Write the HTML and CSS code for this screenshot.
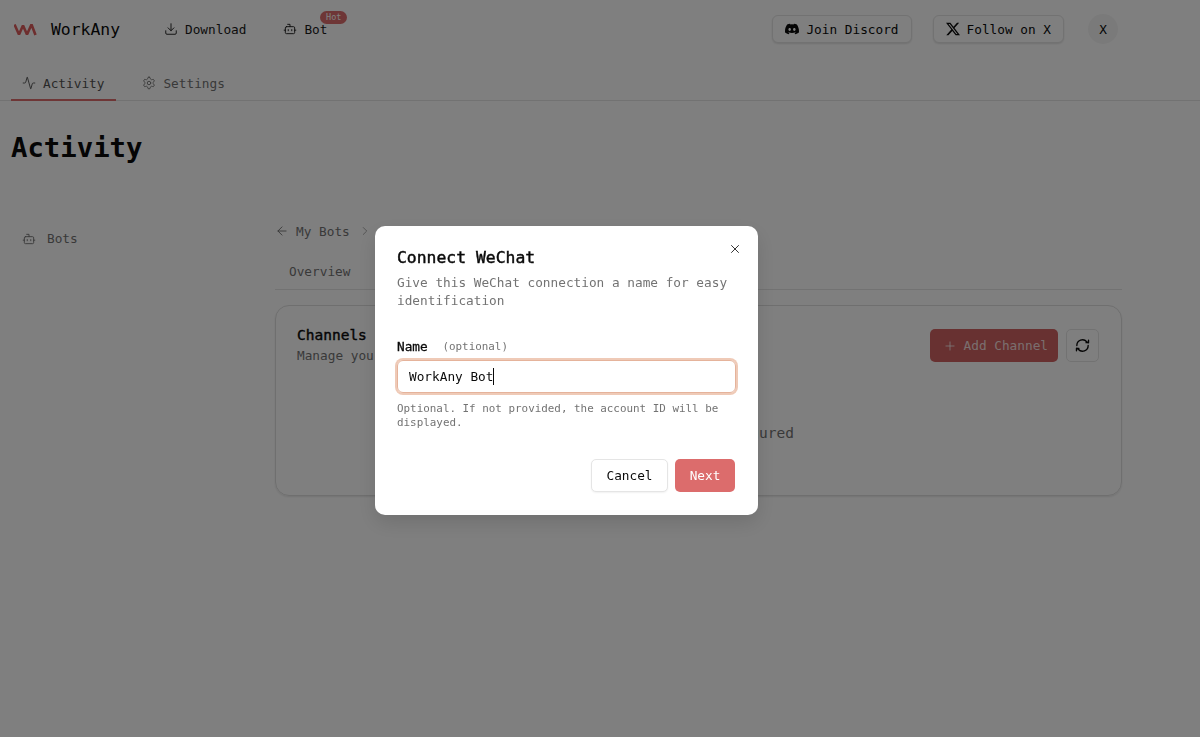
FILE: index.html
```html
<!DOCTYPE html>
<html lang="en">
<head>
    <meta charset="UTF-8">
    <meta name="viewport" content="width=device-width, initial-scale=1.0">
    <title>WorkAny - Activity</title>
    <link rel="stylesheet" href="styles.css">
</head>
<body>

    <header class="topbar">
        <div class="brand">
            <svg class="logo" viewBox="0 0 23 13" width="23" height="13" fill="none" stroke="#dc5c5c" stroke-width="2.6" stroke-linejoin="bevel">
                <path d="M0.500 1.500L5 11.500 9 2.500 13 11.500 17.500 1.500 21.500 12"/>
            </svg>
            <span>WorkAny</span>
        </div>
        <a class="nav-link">
            <svg class="icon" viewBox="0 0 24 24"><path d="M12 15V3"/><path d="M21 15v4a2 2 0 0 1-2 2H5a2 2 0 0 1-2-2v-4"/><path d="m7 10 5 5 5-5"/></svg>
            Download
        </a>
        <a class="nav-link bot-link">
            <svg class="icon" viewBox="0 0 24 24"><path d="M12 8V4H8"/><rect x="4" y="8" width="16" height="12" rx="2"/><path d="M2 14h2"/><path d="M20 14h2"/><path d="M15 13v2"/><path d="M9 13v2"/></svg>
            Bot
            <span class="hot">Hot</span>
        </a>
        <div class="topbar-right">
            <a class="outline-btn">
                <svg class="brand-icon" viewBox="0 0 24 24" fill="#0a0a0a"><path d="M20.317 4.37a19.790 19.790 0 0 0-4.885-1.515.074.074 0 0 0-.079.037c-.21.375-.444.864-.608 1.25a18.270 18.270 0 0 0-5.487 0 12.640 12.640 0 0 0-.617-1.25.077.077 0 0 0-.079-.037A19.740 19.740 0 0 0 3.677 4.370a.070.070 0 0 0-.032.027C.533 9.046-.32 13.580.099 18.057a.082.082 0 0 0 .031.057 19.900 19.900 0 0 0 5.993 3.030.078.078 0 0 0 .084-.028 14.090 14.090 0 0 0 1.226-1.994.076.076 0 0 0-.041-.106 13.107 13.107 0 0 1-1.872-.892.077.077 0 0 1-.008-.128 10.200 10.200 0 0 0 .372-.292.074.074 0 0 1 .077-.010c3.928 1.793 8.180 1.793 12.062 0a.074.074 0 0 1 .078.010c.12.098.246.198.373.292a.077.077 0 0 1-.006.127 12.299 12.299 0 0 1-1.873.892.077.077 0 0 0-.041.107c.36.698.772 1.362 1.225 1.993a.076.076 0 0 0 .084.028 19.839 19.839 0 0 0 6.002-3.030.077.077 0 0 0 .032-.054c.5-5.177-.838-9.674-3.549-13.660a.061.061 0 0 0-.031-.030zM8.020 15.330c-1.183 0-2.157-1.085-2.157-2.419 0-1.333.956-2.419 2.157-2.419 1.210 0 2.176 1.096 2.157 2.420 0 1.333-.956 2.418-2.157 2.418zm7.975 0c-1.183 0-2.157-1.085-2.157-2.419 0-1.333.955-2.419 2.157-2.419 1.210 0 2.176 1.096 2.157 2.420 0 1.333-.946 2.418-2.157 2.418z"/></svg>
                Join Discord
            </a>
            <a class="outline-btn">
                <svg class="brand-icon" viewBox="0 0 24 24" fill="#0a0a0a"><path d="M18.901 1.153h3.680l-8.040 9.190L24 22.846h-7.406l-5.800-7.584-6.638 7.584H.474l8.600-9.830L0 1.154h7.594l5.243 6.932ZM17.610 20.644h2.039L6.486 3.240H4.298Z"/></svg>
                Follow on X
            </a>
            <div class="avatar">X</div>
        </div>
    </header>

    <nav class="tabs">
        <a class="tab active">
            <svg class="icon" viewBox="0 0 24 24"><path d="M22 12h-2.480a2 2 0 0 0-1.930 1.460l-2.350 8.360a.25.25 0 0 1-.480 0L9.240 2.180a.25.25 0 0 0-.480 0l-2.350 8.360A2 2 0 0 1 4.490 12H2"/></svg>
            Activity
        </a>
        <a class="tab">
            <svg class="icon" viewBox="0 0 24 24"><path d="M12.220 2h-.44a2 2 0 0 0-2 2v.18a2 2 0 0 1-1 1.730l-.43.25a2 2 0 0 1-2 0l-.15-.08a2 2 0 0 0-2.730.73l-.22.380a2 2 0 0 0 .730 2.730l.15.1a2 2 0 0 1 1 1.720v.51a2 2 0 0 1-1 1.740l-.15.09a2 2 0 0 0-.730 2.730l.22.380a2 2 0 0 0 2.730.730l.15-.08a2 2 0 0 1 2 0l.43.25a2 2 0 0 1 1 1.730V20a2 2 0 0 0 2 2h.44a2 2 0 0 0 2-2v-.18a2 2 0 0 1 1-1.730l.43-.25a2 2 0 0 1 2 0l.15.08a2 2 0 0 0 2.730-.730l.22-.390a2 2 0 0 0-.730-2.730l-.15-.08a2 2 0 0 1-1-1.740v-.5a2 2 0 0 1 1-1.740l.15-.09a2 2 0 0 0 .730-2.730l-.22-.380a2 2 0 0 0-2.730-.730l-.15.08a2 2 0 0 1-2 0l-.43-.25a2 2 0 0 1-1-1.730V4a2 2 0 0 0-2-2z"/><circle cx="12" cy="12" r="3"/></svg>
            Settings
        </a>
    </nav>

    <h1 class="page-title">Activity</h1>

    <div class="content">
        <aside class="sidebar">
            <a class="side-link">
                <svg class="icon" viewBox="0 0 24 24"><path d="M12 8V4H8"/><rect x="4" y="8" width="16" height="12" rx="2"/><path d="M2 14h2"/><path d="M20 14h2"/><path d="M15 13v2"/><path d="M9 13v2"/></svg>
                Bots
            </a>
        </aside>
        <main class="main">
            <div class="crumbs">
                <svg class="icon" viewBox="0 0 24 24"><path d="m12 19-7-7 7-7"/><path d="M19 12H5"/></svg>
                <span>My Bots</span>
                <svg class="icon crumb-sep" viewBox="0 0 24 24"><path d="m9 18 6-6-6-6"/></svg>
            </div>
            <div class="sub-tabs">
                <a class="sub-tab">Overview</a>
            </div>
            <section class="card">
                <div class="card-head">
                    <div>
                        <h2>Channels</h2>
                        <p>Manage your connected channels</p>
                    </div>
                    <div class="card-actions">
                        <button class="add-btn">
                            <svg class="icon" viewBox="0 0 24 24"><path d="M5 12h14"/><path d="M12 5v14"/></svg>
                            Add Channel
                        </button>
                        <button class="refresh-btn">
                            <svg class="icon" viewBox="0 0 24 24"><path d="M4 12a8 8 0 0 1 14-5.300L20 8"/><path d="M20.500 4.500V8H17"/><path d="M20 12a8 8 0 0 1-14 5.300L4 16"/><path d="M3.500 19.500V16H7"/></svg>
                        </button>
                    </div>
                </div>
                <p class="empty">No channels configured</p>
            </section>
        </main>
    </div>

    <div class="overlay"></div>

    <div class="dialog">
        <button class="close-btn">
            <svg class="icon" viewBox="0 0 24 24"><path d="M18 6 6 18"/><path d="m6 6 12 12"/></svg>
        </button>
        <h3>Connect WeChat</h3>
        <p class="dialog-desc">Give this WeChat connection a name for easy identification</p>
        <label class="field-label"><b>Name</b> <span>(optional)</span></label>
        <div class="text-field">WorkAny Bot<span class="caret"></span></div>
        <p class="help">Optional. If not provided, the account ID will be displayed.</p>
        <div class="dialog-actions">
            <button class="cancel-btn">Cancel</button>
            <button class="next-btn">Next</button>
        </div>
    </div>

</body>
</html>
```

FILE: styles.css
```css
* {
    box-sizing: border-box;
}
html, body {
    height: 100%;
}
body {
    margin: 0;
    font-family: "DejaVu Sans Mono", "Liberation Mono", monospace;
    font-size: 12.75px;
    color: #0a0a0a;
    background-color: #ffffff;
    overflow: hidden;
}
.icon {
    width: 14px;
    height: 14px;
    fill: none;
    stroke: currentColor;
    stroke-width: 1.6;
    stroke-linecap: round;
    stroke-linejoin: round;
    flex: none;
}
.brand-icon {
    width: 14px;
    height: 14px;
    flex: none;
}

/* top bar */
.topbar {
    display: flex;
    align-items: center;
    height: 58px;
    padding: 0 82px 0 14px;
}
.brand {
    display: flex;
    align-items: center;
    gap: 14px;
    width: 150px;
    font-size: 16.4px;
}
.nav-link {
    display: flex;
    align-items: center;
    gap: 7px;
    color: #1a1a1a;
    margin-right: 37px;
}
.bot-link {
    position: relative;
}
.hot {
    position: absolute;
    top: -11px;
    right: -20px;
    padding: 0 6px;
    height: 13px;
    line-height: 13px;
    font-size: 8.5px;
    color: #fff;
    background: #dc6c6c;
    border-radius: 7px;
}
.topbar-right {
    margin-left: auto;
    display: flex;
    align-items: center;
}
.outline-btn {
    display: flex;
    align-items: center;
    gap: 7px;
    height: 28px;
    padding: 0 12px;
    margin-right: 21px;
    border: 1px solid #e5e5e5;
    border-radius: 6px;
    background: #fff;
    box-shadow: 0 1px 2px rgba(0, 0, 0, 0.12);
}
.avatar {
    width: 30px;
    height: 30px;
    margin-left: 3px;
    border-radius: 50%;
    background: #f5f5f5;
    display: flex;
    align-items: center;
    justify-content: center;
}

/* tabs */
.tabs {
    display: flex;
    gap: 15px;
    height: 43px;
    padding-left: 11px;
    border-bottom: 1px solid #e5e5e5;
}
.tab {
    display: flex;
    align-items: center;
    gap: 7px;
    height: 43px;
    padding: 9px 12px 0 11px;
    color: #737373;
    border-bottom: 2px solid transparent;
}
.tab.active {
    color: #525252;
    border-bottom-color: #dc6c6c;
}
.page-title {
    margin: 29px 0 0 11px;
    font-size: 27.3px;
    line-height: 36px;
    font-weight: 700;
}

/* body */
.content {
    display: flex;
    padding-top: 43px;
}
.sidebar {
    width: 275px;
    flex: none;
    padding: 22px 0 0 22px;
}
.side-link {
    display: flex;
    align-items: center;
    gap: 11px;
    color: #737373;
}
.main {
    width: 847px;
}
.crumbs {
    display: flex;
    align-items: center;
    gap: 7px;
    height: 18px;
    margin-top: 13px;
    color: #737373;
}
.crumb-sep {
    margin-left: 1px;
    color: #a3a3a3;
}
.sub-tabs {
    height: 41px;
    margin-top: 9px;
    padding: 0 14px;
    border-bottom: 1px solid #e5e5e5;
    line-height: 46px;
    color: #737373;
}
.card {
    margin-top: 15px;
    height: 191px;
    padding: 20px 22px 0 21px;
    border: 1px solid #dedede;
    border-radius: 14px;
    box-shadow: 0 1px 2px rgba(0, 0, 0, 0.1);
}
.card-head {
    display: flex;
    justify-content: space-between;
}
.card h2 {
    margin: 0;
    font-size: 14.5px;
    line-height: 18px;
    font-weight: 400;
    -webkit-text-stroke: 0.4px #0a0a0a;
}
.card-head p {
    margin: 4px 0 0;
    color: #737373;
}
.card-actions {
    display: flex;
    gap: 8px;
    margin-top: 3px;
}
button {
    font-family: inherit;
    font-size: inherit;
    cursor: pointer;
}
.add-btn {
    display: flex;
    align-items: center;
    gap: 7px;
    height: 33px;
    padding: 0 10px 0 13px;
    border: none;
    border-radius: 5px;
    color: rgba(255, 255, 255, 0.8);
    background: #d06262;
}
.refresh-btn {
    display: flex;
    align-items: center;
    justify-content: center;
    width: 33px;
    height: 33px;
    padding: 0;
    background: #fff;
    border: 1px solid #e5e5e5;
    border-radius: 5px;
    color: #0a0a0a;
}
.refresh-btn .icon {
    width: 17px;
    height: 17px;
    stroke-width: 1.9;
}
.empty {
    margin: 62px 0 0;
    text-align: center;
    font-size: 14.5px;
    color: #737373;
}

/* dialog */
.overlay {
    position: fixed;
    inset: 0;
    background: rgba(0, 0, 0, 0.5);
}
.dialog {
    position: fixed;
    left: 375px;
    top: 226px;
    width: 383px;
    height: 289px;
    padding: 22px 22px;
    background: #fff;
    border-radius: 10px;
    box-shadow: 0 8px 20px rgba(0, 0, 0, 0.12);
}
.close-btn {
    position: absolute;
    top: 15px;
    right: 15px;
    width: 16px;
    height: 16px;
    padding: 0;
    border: none;
    background: none;
    color: #262626;
    display: flex;
    align-items: center;
    justify-content: center;
}
.dialog h3 {
    margin: 0;
    font-size: 16.4px;
    line-height: 20px;
    font-weight: 400;
    -webkit-text-stroke: 0.45px #0a0a0a;
}
.dialog-desc {
    margin: 6px 0 0;
    line-height: 18px;
    color: #737373;
}
.field-label {
    display: block;
    margin-top: 28px;
    line-height: 18px;
}
.field-label b {
    font-weight: 400;
    -webkit-text-stroke: 0.3px #0a0a0a;
}
.field-label span {
    margin-left: 7px;
    font-size: 10.9px;
    color: #737373;
    vertical-align: 1px;
}
.text-field {
    display: flex;
    align-items: center;
    margin-top: 4px;
    height: 33px;
    padding: 0 11px;
    width: 339px;
    border: 1px solid #e5b39b;
    border-radius: 6px;
    box-shadow: 0 0 0 2px #efcab7;
}
.caret {
    display: inline-block;
    width: 1px;
    height: 17px;
    background: #0a0a0a;
}
.help {
    margin: 9px 0 0;
    font-size: 10.9px;
    line-height: 14px;
    color: #737373;
}
.dialog-actions {
    display: flex;
    justify-content: flex-end;
    gap: 7px;
    margin-top: 29px;
    margin-right: 1px;
}
.cancel-btn {
    width: 77px;
    height: 33px;
    background: #fff;
    border: 1px solid #e5e5e5;
    border-radius: 5px;
    box-shadow: 0 1px 2px rgba(0, 0, 0, 0.06);
    color: #0a0a0a;
}
.next-btn {
    width: 60px;
    height: 33px;
    background: #dc6c6c;
    border: none;
    border-radius: 5px;
    color: #fff;
}
```
